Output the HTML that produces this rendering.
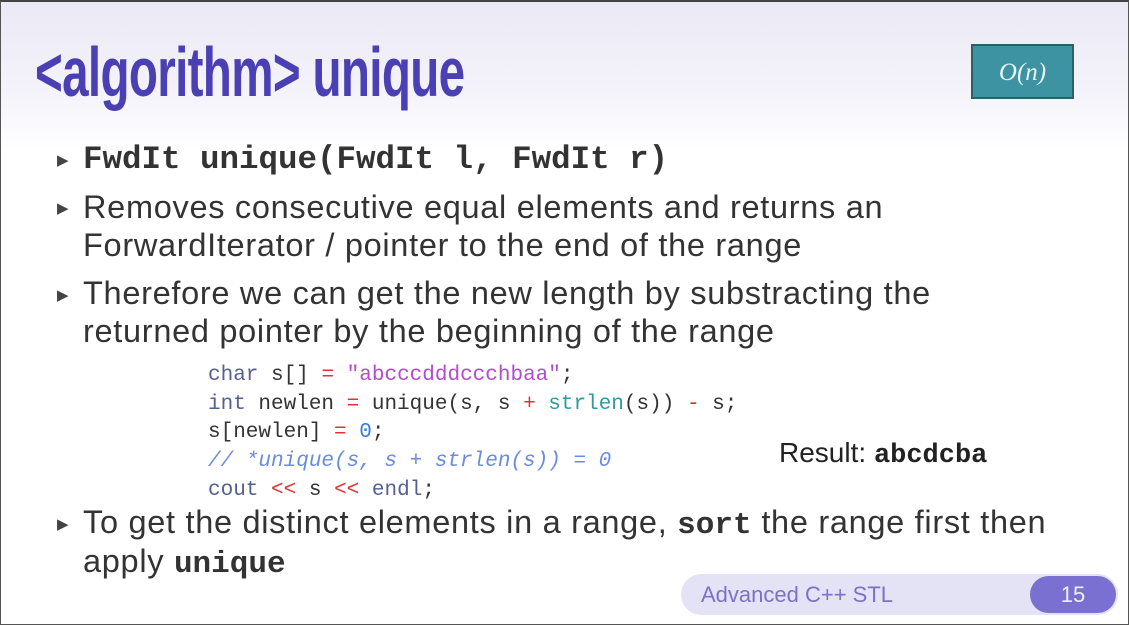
<!DOCTYPE html>
<html><head><style>
body{margin:0;width:1129px;height:624px;overflow:hidden;background:#fff;}
.s{position:absolute;left:0;top:0;width:1127px;height:622px;border:1px solid #555;border-top:2px solid #444;background:linear-gradient(#ebe9f5 0px,#f4f3fa 90px,#fff 150px);font-family:"Liberation Sans",sans-serif;color:#333;}
.t{position:absolute;left:34px;top:30px;font-size:70px;font-weight:bold;color:#4b3fb4;transform:scaleX(0.68);transform-origin:left top;white-space:nowrap;letter-spacing:-1px}
.on{position:absolute;left:970px;top:42px;width:103px;height:55px;background:#3e93a3;border:2px solid #2e5f68;color:#e8f4f6;font-family:"Liberation Serif",serif;font-style:italic;font-size:25px;text-align:center;line-height:53px;box-sizing:border-box}
.b{position:absolute;left:56px;font-size:15px;color:#444}
.l{position:absolute;left:82px;font-size:32.5px;letter-spacing:0.7px;white-space:nowrap;color:#333}
.m{font-family:"Liberation Mono",monospace;font-weight:bold;letter-spacing:0}
.c{position:absolute;left:207px;font-family:"Liberation Mono",monospace;font-size:21px;white-space:nowrap;color:#333}
.k{color:#56608f}.p{color:#b24bd0}.r{color:#d33}.g{color:#2f9aa0}.n{color:#3a7be0}.cm{color:#6b8be0;font-style:italic}
.f{position:absolute;left:680px;top:572px;width:437px;height:41px;border-radius:21px;background:#e4e2f5}
.f span{position:absolute;left:20px;top:8px;font-size:22px;color:#7a72c8}
.pg{position:absolute;right:2px;top:2px;width:86px;height:37px;border-radius:19px;background:#7a70d2;color:#eee;font-size:22px;text-align:center;line-height:37px}
</style></head><body><div class="s">
<div class="t">&lt;algorithm&gt; unique</div>
<div class="on">O(n)</div>
<div class="b" style="top:149px">&#9654;</div><div class="l m" style="top:139px;font-size:32.5px">FwdIt unique(FwdIt l, FwdIt r)</div>
<div class="b" style="top:197px">&#9654;</div><div class="l" style="top:187px">Removes consecutive equal elements and returns an</div>
<div class="l" style="top:225px">ForwardIterator / pointer to the end of the range</div>
<div class="b" style="top:284px">&#9654;</div><div class="l" style="top:273px">Therefore we can get the new length by substracting the</div>
<div class="l" style="top:311px">returned pointer by the beginning of the range</div>
<div class="c" style="top:362px"><span class="k">char</span> s[] <span class="r">=</span> <span class="p">"abcccdddccchbaa"</span>;</div>
<div class="c" style="top:391px"><span class="k">int</span> newlen <span class="r">=</span> unique(s, s <span class="r">+</span> <span class="g">strlen</span>(s)) <span class="r">-</span> s;</div>
<div class="c" style="top:419px">s[newlen] <span class="r">=</span> <span class="n">0</span>;</div>
<div class="c cm" style="top:448px">// *unique(s, s + strlen(s)) = 0</div>
<div class="c" style="top:477px"><span class="k">cout</span> <span class="r">&lt;&lt;</span> s <span class="r">&lt;&lt;</span> <span class="k">endl</span>;</div>
<div style="position:absolute;left:778px;top:435px;font-size:28px;color:#222">Result: <b class="m" style="font-size:27px">abcdcba</b></div>
<div class="b" style="top:513px">&#9654;</div><div class="l" style="top:502px">To get the distinct elements in a range, <span class="m" style="font-size:31px">sort</span> the range first then</div>
<div class="l" style="top:541px">apply <span class="m" style="font-size:31px">unique</span></div>
<div class="f"><span>Advanced C++ STL</span><div class="pg">15</div></div>
</div></body></html>
